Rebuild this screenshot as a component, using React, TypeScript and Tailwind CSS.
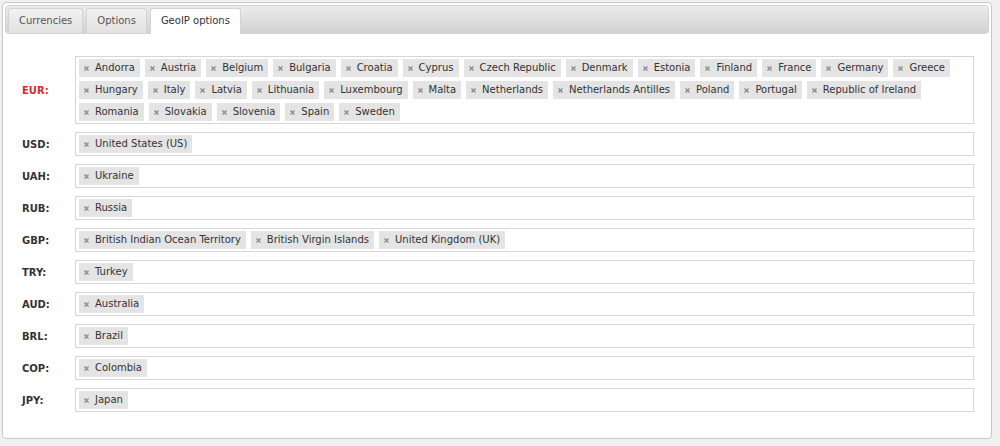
import React from "react";

const font = "font-['DejaVu_Sans','Verdana',sans-serif]";

const rows: { code: string; countries: string[]; active?: boolean }[] = [
  {
    code: "EUR",
    active: true,
    countries: [
      "Andorra", "Austria", "Belgium", "Bulgaria", "Croatia", "Cyprus", "Czech Republic",
      "Denmark", "Estonia", "Finland", "France", "Germany", "Greece", "Hungary", "Italy",
      "Latvia", "Lithuania", "Luxembourg", "Malta", "Netherlands", "Netherlands Antilles",
      "Poland", "Portugal", "Republic of Ireland", "Romania", "Slovakia", "Slovenia",
      "Spain", "Sweden",
    ],
  },
  { code: "USD", countries: ["United States (US)"] },
  { code: "UAH", countries: ["Ukraine"] },
  { code: "RUB", countries: ["Russia"] },
  { code: "GBP", countries: ["British Indian Ocean Territory", "British Virgin Islands", "United Kingdom (UK)"] },
  { code: "TRY", countries: ["Turkey"] },
  { code: "AUD", countries: ["Australia"] },
  { code: "BRL", countries: ["Brazil"] },
  { code: "COP", countries: ["Colombia"] },
  { code: "JPY", countries: ["Japan"] },
];

const Tag = ({ label }: { label: string }) => (
  <li className="flex items-center h-[18px] bg-[#e4e4e4] pl-[5px] pr-[5px] text-[10px] leading-[18px] text-[#333]">
    <svg width="5" height="5" viewBox="0 0 5 5" className="mr-[6px]">
      <path d="M0.5 0.5L4.5 4.5M4.5 0.5L0.5 4.5" stroke="#8a8a8a" strokeWidth="1.4" />
    </svg>
    {label}
  </li>
);

const Tab = ({ label, active }: { label: string; active?: boolean }) => (
  <div
    className={
      active
        ? "h-[26px] -mb-px px-[10px] border border-b-0 border-[#d3d3d3] rounded-t-[3px] bg-white text-[10px] leading-[24px] text-[#333]"
        : "h-[25px] px-[10px] border border-b-0 border-[#d3d3d3] rounded-t-[3px] bg-gradient-to-b from-[#f2f2f2] to-[#e2e2e2] text-[10px] leading-[24px] text-[#555]"
    }
  >
    {label}
  </div>
);

export default function App() {
  return (
    <div className={`min-h-screen bg-[#f0f0f0] pt-[2px] pl-[2px] pb-[7px] ${font}`}>
      <div className="w-[990px] border border-[#c9c9c9] rounded-[4px] bg-white p-[2px]">
        <div className="h-[29px] flex items-end gap-[3px] pl-[2px] border border-[#d3d3d3] rounded-[4px] bg-gradient-to-b from-[#ebebeb] to-[#d2d2d2]">
          <Tab label="Currencies" />
          <Tab label="Options" />
          <Tab label="GeoIP options" active />
        </div>
        <div className="pt-[22px] pb-[24px] pl-[17px] pr-[15px] flex flex-col gap-[8px]">
          {rows.map((row) => (
            <div key={row.code} className="flex items-center">
              <div
                className={`w-[53px] shrink-0 text-[10px] font-bold ${
                  row.active ? "text-[#d42a2a]" : "text-[#333]"
                }`}
              >
                {row.code}:
              </div>
              <ul className="flex-1 flex flex-wrap gap-x-[5px] gap-y-[4px] border border-[#d6d6d6] bg-white py-[2px] pl-[3px] pr-[3px]">
                {row.countries.map((c) => (
                  <Tag key={c} label={c} />
                ))}
              </ul>
            </div>
          ))}
        </div>
      </div>
    </div>
  );
}
